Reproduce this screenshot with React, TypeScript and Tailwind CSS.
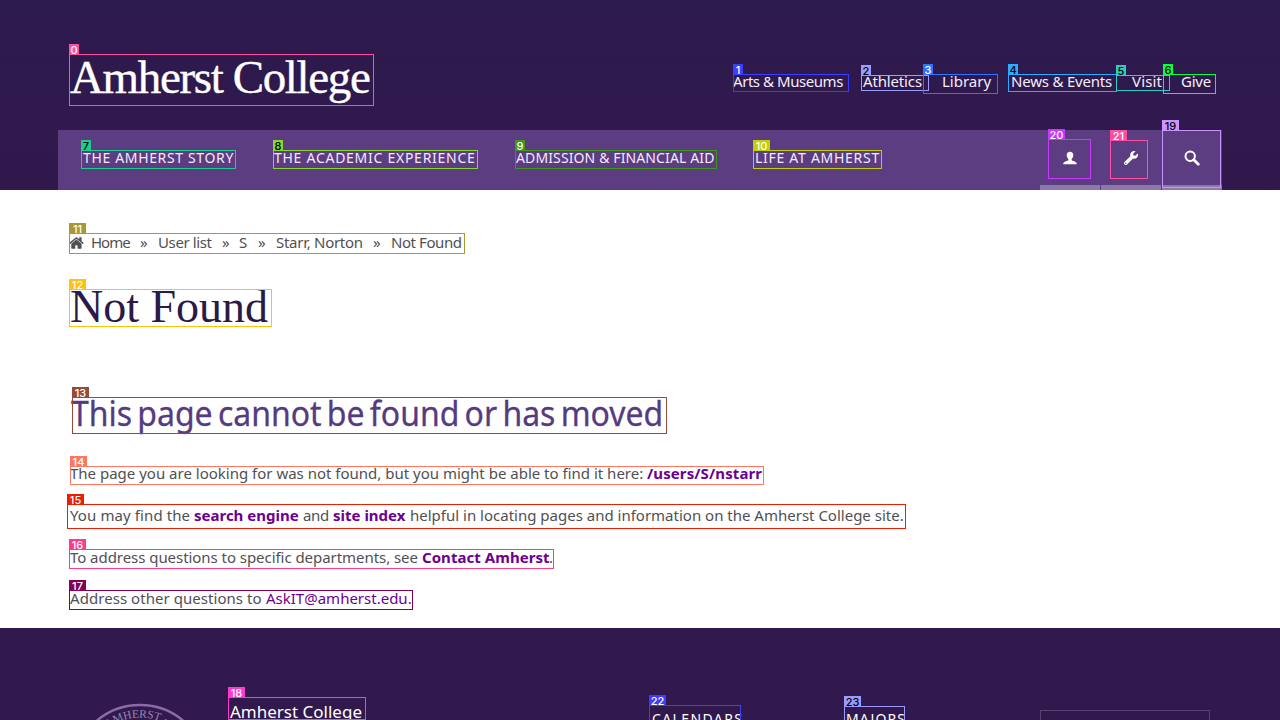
import type { ReactNode } from "react";
import { FaWrench } from "react-icons/fa";

function HomeIcon() {
  return (
    <svg viewBox="0 0 1792 1792" className="h-4 w-4 shrink-0" fill="currentColor">
      <path d="M1408 992v480q0 26-19 45t-45 19h-384v-384h-256v384h-384q-26 0-45-19t-19-45v-480q0-1 .5-3t.5-3l575-474 575 474q1 2 1 6zm223-69l-62 74q-8 9-21 11h-3q-13 0-21-7l-692-577-692 577q-12 8-24 7-13-2-21-11l-62-74q-8-10-7-23.5t11-21.5l719-599q32-26 76-26t76 26l244 204v-195q0-14 9-23t23-9h192q14 0 23 9t9 23v408l219 182q10 8 11 21.5t-7 23.5z" />
    </svg>
  );
}

function UserIcon() {
  return (
    <svg viewBox="0 0 14 14" className="h-3.5 w-3.5" fill="currentColor">
      <path d="M7 0.8c2 0 3.3 1.3 3.3 3.3 0 1.6-.7 3.1-1.7 3.8v.8c0 .5.3.8 1 1 2.300.6 4.100 1.300 4.300 3.500H.1c.2-2.200 2-2.900 4.300-3.500.7-.2 1-.5 1-1v-.8C4.400 7.200 3.700 5.700 3.700 4.100 3.700 2.100 5 .8 7 .8z" />
    </svg>
  );
}

function SearchIcon() {
  return (
    <svg viewBox="0 0 16 16" className="h-4 w-4" fill="none" stroke="currentColor">
      <circle cx="6.2" cy="6.2" r="4.7" strokeWidth="2" />
      <path d="M9.800 9.800L14.300 14.300" strokeWidth="2.700" strokeLinecap="round" />
    </svg>
  );
}

const topLinks = [
  ["Arts & Museums", "w-[110px] tracking-[-0.45px]"],
  ["Athletics", "w-[59px] tracking-[-0.15px]"],
  ["Library", "w-[49px]"],
  ["News & Events", "w-[101px] tracking-[-0.2px]"],
  ["Visit", "w-[29px] tracking-[0.15px]"],
  ["Give", "w-[30px] tracking-[-0.25px]"],
];

const mainLinks = [
  ["THE AMHERST STORY", "w-[191px] tracking-[0.65px]"],
  ["THE ACADEMIC EXPERIENCE", "w-[242px] tracking-[0.73px]"],
  ["ADMISSION & FINANCIAL AID", "w-[239px] tracking-[0.12px]"],
  ["LIFE AT AMHERST", "w-[130px] tracking-[0.72px]"],
];

const crumbs = [
  ["Home", "w-[49px] tracking-[-1px]"],
  ["»", "w-[18px]"],
  ["User list", "w-[64px] tracking-[-0.38px]"],
  ["»", "w-[17px]"],
  ["S", "w-[19px]"],
  ["»", "w-[18px]"],
  ["Starr, Norton", "w-[97px] tracking-[-0.28px]"],
  ["»", "w-[18px]"],
  ["Not Found", "tracking-[-0.43px]"],
];

const marks = [
  ["0", "left-[69px] top-[54px] w-[305px] h-[52px] border-[#ff4fa3]", "bg-[#ff4fa3] text-white"],
  ["1", "left-[733px] top-[74px] w-[116px] h-[18px] border-[#3d3dff]", "bg-[#3d3dff] text-white"],
  ["2", "left-[861px] top-[75px] w-[68px] h-[16px] border-[#9c9cff]", "bg-[#9c9cff] text-black"],
  ["3", "left-[923px] top-[74px] w-[75px] h-[20px] border-[#2e74ff]", "bg-[#2e74ff] text-white"],
  ["4", "left-[1008px] top-[74px] w-[109px] h-[18px] border-[#2eaaff]", "bg-[#2eaaff] text-black"],
  ["5", "left-[1116px] top-[75px] w-[54px] h-[16px] border-[#2eccc4]", "bg-[#2eccc4] text-black"],
  ["6", "left-[1163px] top-[74px] w-[53px] h-[20px] border-[#0aff43]", "bg-[#0aff43] text-black"],
  ["7", "left-[81px] top-[150px] w-[155px] h-[19px] border-[#18cf90]", "bg-[#18cf90] text-black"],
  ["8", "left-[273px] top-[150px] w-[205px] h-[19px] border-[#86d82c]", "bg-[#86d82c] text-black"],
  ["9", "left-[515px] top-[150px] w-[202px] h-[19px] border-[#3d9917]", "bg-[#3d9917] text-white"],
  ["10", "left-[753px] top-[150px] w-[129px] h-[19px] border-[#c3d000]", "bg-[#c3d000] text-white"],
  ["11", "left-[69px] top-[233px] w-[396px] h-[21px] border-[#aa9833]", "bg-[#aa9833] text-white"],
  ["12", "left-[69px] top-[289px] w-[203px] h-[38px] border-[#ffc20a]", "bg-[#ffc20a] text-white"],
  ["13", "left-[72px] top-[397px] w-[595px] h-[37px] border-[#984a36]", "bg-[#984a36] text-white"],
  ["14", "left-[70px] top-[466px] w-[694px] h-[19px] border-[#ff7763]", "bg-[#ff7763] text-white"],
  ["15", "left-[67px] top-[504px] w-[839px] h-[25px] border-[#ee1c00]", "bg-[#ee1c00] text-white"],
  ["16", "left-[69px] top-[549px] w-[485px] h-[20px] border-[#ff3c85]", "bg-[#ff3c85] text-white"],
  ["17", "left-[69px] top-[590px] w-[344px] h-[20px] border-[#850052]", "bg-[#850052] text-white"],
  ["18", "left-[228px] top-[697px] w-[138px] h-[23px] border-[#ff38d1]", "bg-[#ff38d1] text-white"],
  ["19", "left-[1162px] top-[130px] w-[59px] h-[58px] border-[#ca94ff]", "bg-[#ca94ff] text-black"],
  ["20", "left-[1048px] top-[139px] w-[43px] h-[40px] border-[#ca38ff]", "bg-[#ca38ff] text-white"],
  ["21", "left-[1110px] top-[140px] w-[38px] h-[39px] border-[#ff4fa3]", "bg-[#ff4fa3] text-white"],
  ["22", "left-[649px] top-[705px] w-[92px] h-[30px] border-[#3d3dff]", "bg-[#3d3dff] text-white"],
  ["23", "left-[844px] top-[706px] w-[61px] h-[30px] border-[#9c9cff]", "bg-[#9c9cff] text-black"],
];

function Mark({ label, box, tag }: { label: string; box: string; tag: string }) {
  return (
    <div className={`absolute border ${box}`}>
      <span
        className={`absolute -left-px -top-[11px] h-[11px] text-center font-['Inter'] text-[11px] font-medium leading-[13px] ${label.length > 1 ? "w-[17px]" : "w-[10px]"} ${tag}`}
      >
        {label}
      </span>
    </div>
  );
}

function ToolButton({ children }: { children: ReactNode }) {
  return (
    <div className="flex h-[60px] w-[60px] flex-col text-white">
      <div className="flex h-[55px] items-center justify-center">{children}</div>
      <div className="h-[5px] bg-[#8e77a9]" />
    </div>
  );
}

function Strong({ className, children }: { className: string; children: ReactNode }) {
  return <a className={`inline-block font-bold text-[#6b0091] ${className}`}>{children}</a>;
}

export default function App() {
  return (
    <div className="relative flex h-[720px] w-[1280px] flex-col overflow-hidden whitespace-nowrap bg-white font-['Noto_Sans',sans-serif] text-[15px] leading-5 text-[#505054]">
      <header className="flex h-[190px] flex-col bg-[#31194d] bg-linear-to-b from-[#2d1a4e] to-[#31184c]">
        <div className="flex h-[130px] items-start pl-[70px] text-[#f5edf9]">
          <div className="mt-[51px] w-[663px] font-['Liberation_Serif',serif] text-[47px] leading-[52px] tracking-[-1.36px] text-white">
            <span className="[-webkit-text-stroke:0.4px_white]">Amherst College</span>
          </div>
          <nav className="mt-[71px] flex gap-5">
            {topLinks.map(([t, c]) => (
              <a key={t} className={c}>{t}</a>
            ))}
          </nav>
        </div>
        <div className="ml-[58px] flex h-[60px] w-[1164px] items-start justify-between bg-[#5c3d82]">
          <nav className="flex pl-[25px] pt-[18px] text-[14px] text-[#f4eafa]">
            {mainLinks.map(([t, c]) => (
              <a key={t} className={c}>{t}</a>
            ))}
          </nav>
          <div className="flex gap-px">
            <ToolButton><UserIcon /></ToolButton>
            <ToolButton><FaWrench className="h-3.5 w-3.5" /></ToolButton>
            <ToolButton><SearchIcon /></ToolButton>
          </div>
        </div>
      </header>

      <main className="h-[438px] pl-[70px]">
        <div className="flex items-center pt-[42px]">
          <div className="-ml-px w-[21px] pt-px"><HomeIcon /></div>
          <div className="flex pl-px">
            {crumbs.map(([t, c], i) => (
              <span key={i} className={c}>{t}</span>
            ))}
          </div>
        </div>
        <h1 className="mt-[30px] font-['Liberation_Serif',serif] text-[46px] leading-[50px] text-[#2a1a46]">Not Found</h1>
        <h2 className="mt-[59px] origin-left scale-x-[0.94] pl-px text-[34px] leading-[44px] [word-spacing:-3.2px] text-[#563b80] [-webkit-text-stroke:0.3px_#563b80]">
          This page cannot be found or has moved
        </h2>
        <p className="mt-7 flex">
          <span className="w-[577px]">The page you are looking for was not found, but you might be able to find it here:</span>
          <Strong className="tracking-[0.1px]">/users/S/nstarr</Strong>
        </p>
        <p className="mt-[22px] flex">
          <span className="w-[124px] tracking-[0.1px]">You may find the</span>
          <Strong className="w-[109px]">search engine</Strong>
          <span className="w-[30px] tracking-[-0.3px]">and</span>
          <Strong className="w-[77px]">site index</Strong>
          <span>helpful in locating pages and information on the Amherst College site.</span>
        </p>
        <p className="mt-[22px] flex">
          <span className="w-[352px] tracking-[-0.05px]">To address questions to specific departments, see</span>
          <Strong className="w-[127px] tracking-[0.05px]">Contact Amherst</Strong>
          <span>.</span>
        </p>
        <p className="mt-[21px] flex">
          <span className="w-[196px] tracking-[0.05px]">Address other questions to</span>
          <a className="text-[#6b0091]">AskIT@amherst.edu.</a>
        </p>
      </main>

      <footer className="flex h-[92px] items-start overflow-hidden bg-[#31194d] text-white">
        <svg viewBox="0 0 140 140" className="ml-[70px] mt-[74px] h-[140px] w-[140px] shrink-0">
          <circle cx="70" cy="70" r="67" fill="none" stroke="#8a6ba6" strokeWidth="2.500" />
          <path id="sealArc" d="M15.500 70a54.500 54.500 0 0 1 109 0" fill="none" />
          <text fill="#9d86b5" fontSize="11.500" fontFamily="Liberation Serif">
            <textPath href="#sealArc" startOffset="49%" textAnchor="middle">· AMHERST · A</textPath>
          </text>
        </svg>
        <div className="ml-5 mt-[70px] w-[422px] text-[17px] leading-7">Amherst College</div>
        <div className="mt-[81px] w-[194px] text-[14px] tracking-[1.39px]">CALENDARS</div>
        <div className="mt-[81px] w-[194px] text-[14px] tracking-[1.1px]">MAJORS</div>
        <div className="mt-[82px] h-10 w-[170px] border border-[#594273]" />
      </footer>

      {marks.map(([label, box, tag]) => (
        <Mark key={label} label={label} box={box} tag={tag} />
      ))}
    </div>
  );
}
